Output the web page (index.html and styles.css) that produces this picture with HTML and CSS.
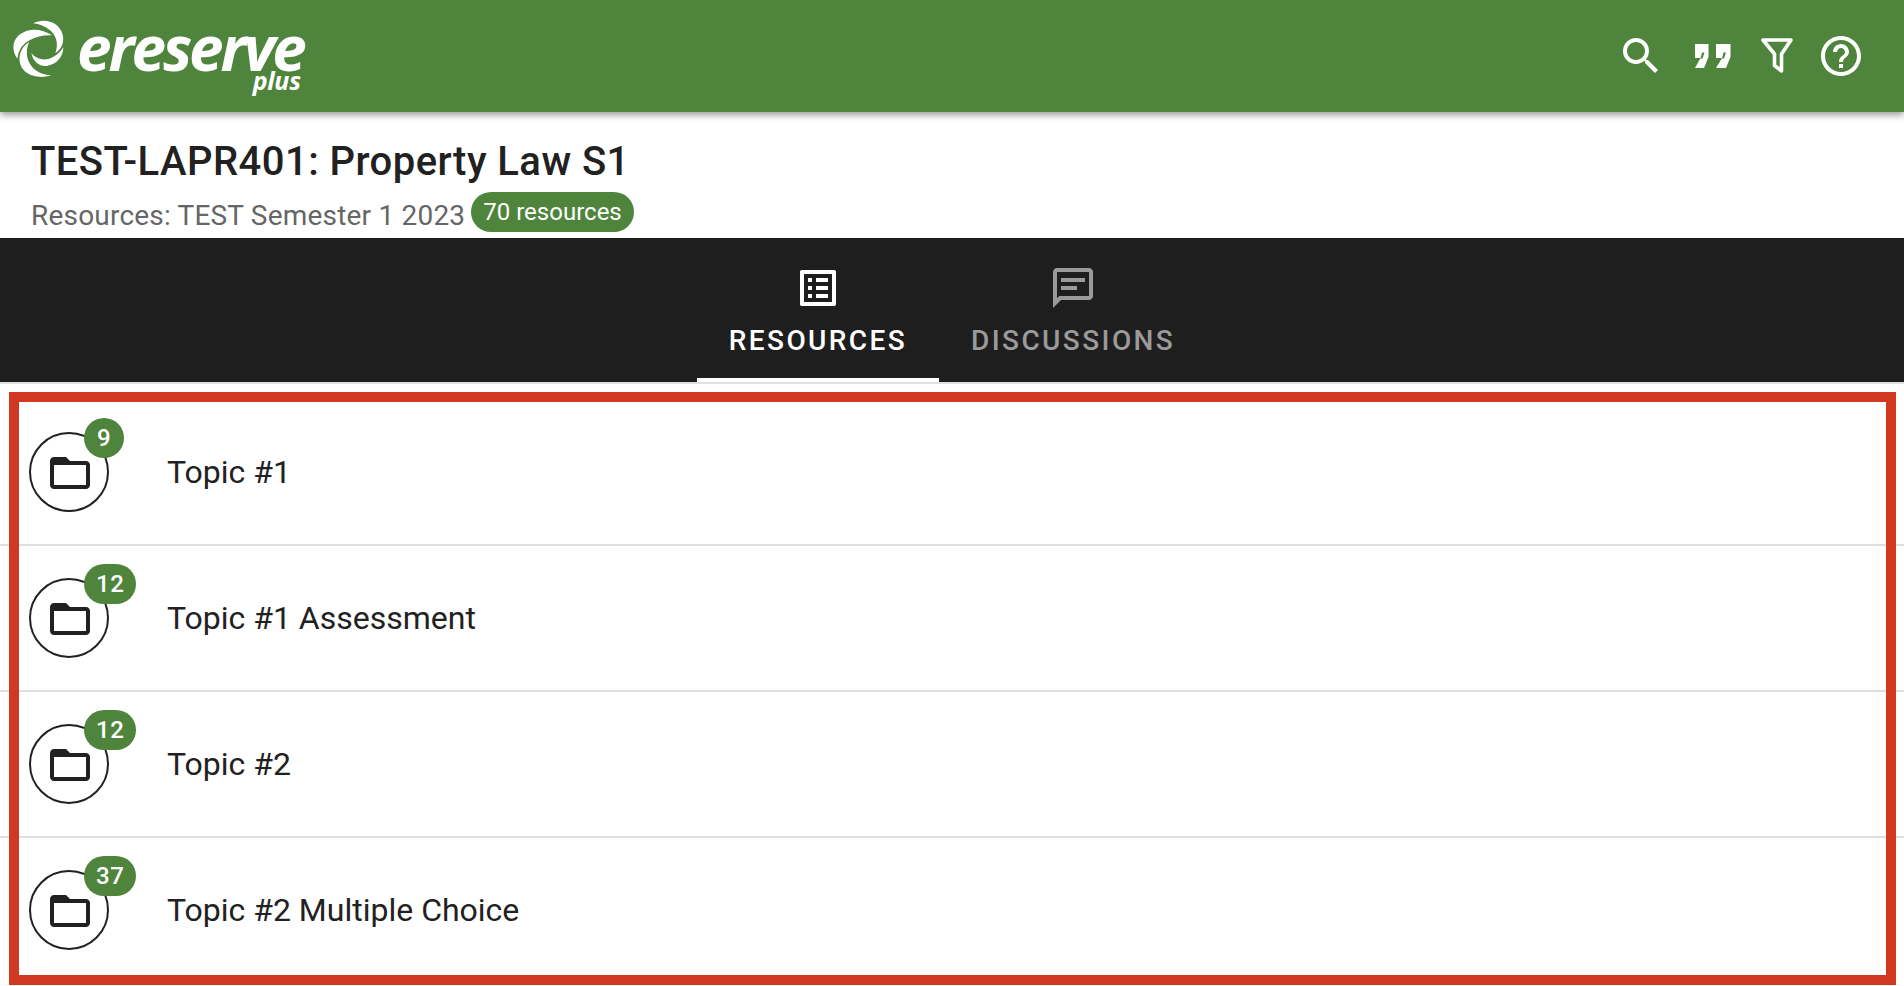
FILE: index.html
```html
<!DOCTYPE html>
<html lang="en">
<head>
    <meta charset="UTF-8" />
    <title>TEST-LAPR401: Property Law S1</title>
    <link rel="stylesheet" href="styles.css">
</head>
<body>
    <header class="app-bar">
        <div class="logo">
            <svg class="logo-swirl" viewBox="0 0 192 204" width="64" height="68">
                <path fill="#fff" d="M75 22C105 6 145 14 160 45C172 72 165 95 142 112C152 85 146 60 128 44C112 31 94 24 75 22Z"/>
                <path fill="#fff" d="M132 58C100 36 58 34 30 60C12 78 12 105 28 128C32 100 44 84 66 72C86 62 108 56 132 58Z"/>
                <path fill="#fff" d="M64 78C42 90 30 116 36 142C44 174 84 192 130 178C100 176 76 164 64 140C54 120 54 98 64 78Z"/>
                <path fill="#fff" d="M166 94C166 122 146 146 116 150C94 152 76 138 70 112C84 128 104 134 124 128C142 122 156 110 166 94Z"/>
            </svg>
            <div class="logo-text">
                <span class="logo-name">ereserve</span>
                <span class="logo-plus">plus</span>
            </div>
        </div>
        <div class="app-actions">
            <svg class="app-icon app-icon-search" viewBox="0 0 24 24"><path d="M15.5 14h-.79l-.28-.27A6.471 6.471 0 0 0 16 9.5 6.5 6.5 0 1 0 9.5 16c1.61 0 3.09-.59 4.23-1.57l.27.28v.79l5 4.99L20.49 19l-4.99-5zm-6 0C7.01 14 5 11.99 5 9.5S7.01 5 9.5 5 14 7.01 14 9.5 11.99 14 9.500 14z"/></svg>
            <svg class="app-icon" viewBox="0 0 48 48"><path fill-rule="evenodd" d="M6 12H19.500V25L15 36H6L11.500 26H6ZM13 20.500H15.500L13.500 26.500H11.500ZM27 12H41.500V25L37 36H27L33 26H27ZM34.500 20.500H37L35 26.500H33Z"/></svg>
            <svg class="app-icon" viewBox="0 0 48 48"><path d="M10 8H38L28.500 22V39L21.500 33.500V22Z" fill="none" stroke="#fff" stroke-width="3.600" stroke-linejoin="round"/></svg>
            <svg class="app-icon" viewBox="0 0 24 24"><path d="M11 18h2v-2h-2v2zm1-16C6.48 2 2 6.48 2 12s4.48 10 10 10 10-4.48 10-10S17.52 2 12 2zm0 18c-4.41 0-8-3.59-8-8s3.590-8 8-8 8 3.590 8 8-3.590 8-8 8zm0-14c-2.210 0-4 1.790-4 4h2c0-1.100.9-2 2-2s2 .9 2 2c0 2-3 1.750-3 5h2c0-2.250 3-2.500 3-5 0-2.210-1.790-4-4-4z"/></svg>
        </div>
    </header>

    <section class="course">
        <h1 class="course-title">TEST-LAPR401: Property Law S1</h1>
        <div class="course-sub">
            <span class="course-term">Resources: TEST Semester 1 2023</span>
            <span class="course-count">70 resources</span>
        </div>
    </section>

    <nav class="tabs">
        <div class="tab tab-active">
            <svg class="tab-icon" viewBox="0 0 24 24"><path d="M19 5v14H5V5h14m1.100-2H3.900c-.5 0-.9.4-.9.9v16.200c0 .4.4.9.9.9h16.200c.4 0 .9-.5.9-.9V3.900c0-.5-.5-.9-.9-.9zM11 7h6v2h-6V7zm0 4h6v2h-6v-2zm0 4h6v2h-6zM7 7h2v2H7zm0 4h2v2H7zm0 4h2v2H7z"/></svg>
            <span>RESOURCES</span>
        </div>
        <div class="tab">
            <svg class="tab-icon" viewBox="0 0 24 24"><path d="M4 4h16v12H5.170L4 17.170V4m0-2c-1.100 0-1.990.9-1.990 2L2 22l4-4h14c1.100 0 2-.9 2-2V4c0-1.100-.9-2-2-2H4zm2 5h12v2H6V7zm0 4h8v2H6v-2z"/></svg>
            <span>DISCUSSIONS</span>
        </div>
    </nav>

    <ul class="topics">
        <li class="topic">
            <div class="topic-icon">
                <svg class="folder" viewBox="0 0 24 24"><path d="M20 6h-8l-2-2H4c-1.100 0-1.990.9-1.990 2L2 18c0 1.100.9 2 2 2h16c1.100 0 2-.9 2-2V8c0-1.100-.9-2-2-2zm0 12H4V8h16v10z"/></svg>
                <span class="topic-count">9</span>
            </div>
            <span class="topic-name">Topic #1</span>
        </li>
        <li class="topic">
            <div class="topic-icon">
                <svg class="folder" viewBox="0 0 24 24"><path d="M20 6h-8l-2-2H4c-1.100 0-1.990.9-1.990 2L2 18c0 1.100.9 2 2 2h16c1.100 0 2-.9 2-2V8c0-1.100-.9-2-2-2zm0 12H4V8h16v10z"/></svg>
                <span class="topic-count">12</span>
            </div>
            <span class="topic-name">Topic #1 Assessment</span>
        </li>
        <li class="topic">
            <div class="topic-icon">
                <svg class="folder" viewBox="0 0 24 24"><path d="M20 6h-8l-2-2H4c-1.100 0-1.990.9-1.990 2L2 18c0 1.100.9 2 2 2h16c1.100 0 2-.9 2-2V8c0-1.100-.9-2-2-2zm0 12H4V8h16v10z"/></svg>
                <span class="topic-count">12</span>
            </div>
            <span class="topic-name">Topic #2</span>
        </li>
        <li class="topic">
            <div class="topic-icon">
                <svg class="folder" viewBox="0 0 24 24"><path d="M20 6h-8l-2-2H4c-1.100 0-1.990.9-1.990 2L2 18c0 1.100.9 2 2 2h16c1.100 0 2-.9 2-2V8c0-1.100-.9-2-2-2zm0 12H4V8h16v10z"/></svg>
                <span class="topic-count">37</span>
            </div>
            <span class="topic-name">Topic #2 Multiple Choice</span>
        </li>
    </ul>

    <!-- red annotation frame drawn over the list -->
    <div class="highlight"></div>
</body>
</html>
```

FILE: styles.css
```css
html, body {
    height: 100%;
}
body {
    font-family: Roboto, "Liberation Sans", sans-serif;
    background: #fff;
    color: #212121;
    margin: 0;
    overflow: hidden;
    position: relative;
}
.app-bar {
    display: flex;
    align-items: center;
    justify-content: space-between;
    height: 112px;
    box-sizing: border-box;
    padding: 0 39px 0 8px;
    background: #4e843b;
    box-shadow: 0 3px 7px rgba(0, 0, 0, 0.4);
    position: relative;
}
.logo {
    display: flex;
    align-items: flex-start;
    gap: 5px;
    align-self: flex-start;
    margin-top: 16px;
}
.logo-swirl {
    display: block;
}
.logo-text {
    display: flex;
    flex-direction: column;
    align-items: flex-end;
    color: #fff;
    font-family: "Open Sans", sans-serif;
    font-style: italic;
    font-weight: 700;
}
.logo-name {
    font-size: 62px;
    line-height: 44px;
    padding-top: 9px;
    letter-spacing: -3.1px;
}
.logo-plus {
    font-size: 25px;
    line-height: 18px;
    margin: 2px 3px 0 0;
    letter-spacing: -0.3px;
}
.app-actions {
    display: flex;
    gap: 16px;
}
.app-icon {
    width: 48px;
    height: 48px;
    fill: #fff;
}
.app-icon-search {
    margin-right: 8px;
}
.course {
    padding: 26px 0 6px 31px;
    height: 126px;
    box-sizing: border-box;
}
.course-title {
    margin: 0 0 6px;
    font-size: 40px;
    line-height: 48px;
    font-weight: 500;
    letter-spacing: 0.45px;
}
.course-sub {
    display: flex;
    align-items: center;
    gap: 6px;
    height: 40px;
    font-size: 28px;
    color: #666;
}
.course-term {
    letter-spacing: 0.2px;
    padding-top: 6px;
}
.course-count {
    background: #4e843b;
    color: #fff;
    font-size: 24px;
    height: 40px;
    line-height: 41px;
    padding: 0 12px;
    border-radius: 20px;
}
.tabs {
    display: flex;
    justify-content: center;
    height: 144px;
    background: #1e1e1e;
    border-bottom: 2px solid #e0e0e0;
}
.tab {
    display: flex;
    flex-direction: column;
    align-items: center;
    box-sizing: border-box;
    padding: 26px 32px 0;
    font-size: 28px;
    font-weight: 500;
    letter-spacing: 2.4px;
    color: #9a9a9a;
}
.tab-active {
    color: #fff;
    border-bottom: 4px solid #fff;
}
.tab-icon {
    width: 48px;
    height: 48px;
    fill: currentColor;
    margin-bottom: 12px;
}
.topics {
    list-style: none;
    margin: 16px 0 0;
    padding: 0;
}
.topic {
    display: flex;
    align-items: center;
    gap: 58px;
    height: 146px;
    box-sizing: border-box;
    padding-left: 29px;
    border-bottom: 2px solid #e0e0e0;
}
.topic:last-child {
    border-bottom-color: transparent;
}
.topic-icon {
    display: flex;
    align-items: center;
    justify-content: center;
    width: 80px;
    height: 80px;
    box-sizing: border-box;
    border: 2px solid #212121;
    border-radius: 50%;
    position: relative;
}
.folder {
    width: 48px;
    height: 48px;
    fill: #212121;
    margin: 1px 0 0 2px;
}
.topic-count {
    position: absolute;
    left: 53px;
    top: -16px;
    min-width: 40px;
    height: 40px;
    box-sizing: border-box;
    padding: 0 12px;
    border-radius: 20px;
    background: #4e843b;
    color: #fff;
    font-size: 24px;
    font-weight: 500;
    letter-spacing: 0.5px;
    line-height: 40px;
    text-align: center;
}
.topic-name {
    font-size: 32px;
}
.highlight {
    position: absolute;
    left: 9px;
    top: 392px;
    width: 1887px;
    height: 593px;
    box-sizing: border-box;
    border: 10px solid #d0381f;
}
```
